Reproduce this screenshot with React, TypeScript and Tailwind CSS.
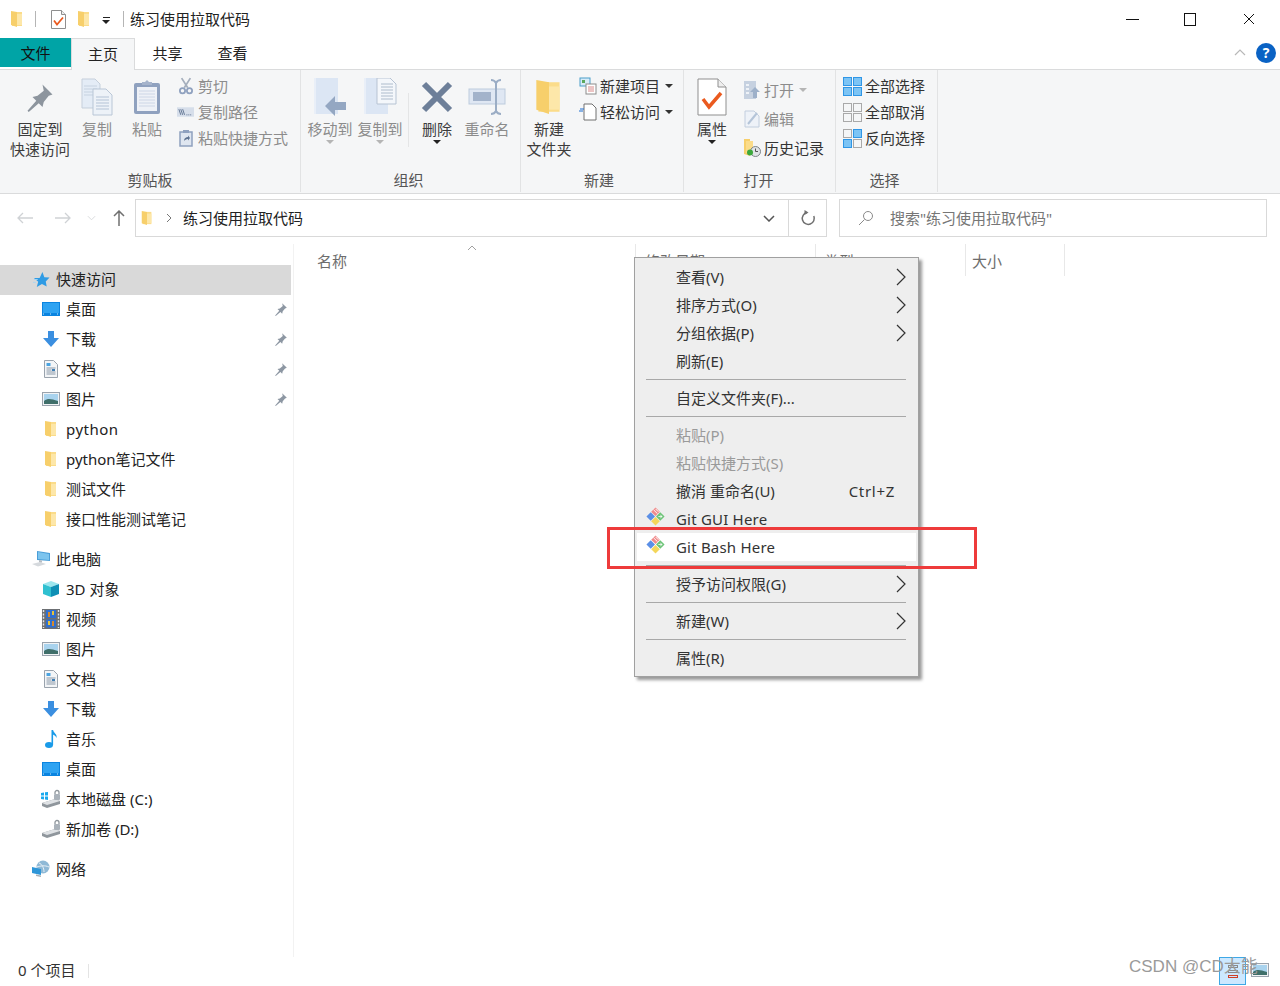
import type { ReactNode } from "react";

function Folder({ className = "w-[16px] h-[18px]" }: { className?: string }) {
  return (
    <svg viewBox="0 0 16 18" className={className}>
      <path d="M3 2h10v14H3z" fill="#fbdc8a" />
      <path d="M2 1l6 1v15l-6-2z" fill="#f7cf6b" />
      <path d="M8 4h5v11H8z" fill="#fde7a9" />
    </svg>
  );
}

function Pin({ className = "w-[14px] h-[14px]", color = "#8d97a3" }: { className?: string; color?: string }) {
  return (
    <svg viewBox="0 0 24 24" className={className}>
      <path d="M14 2l8 8-3 1-4 5-1 4-3-3-8 7-1-1 7-8-3-3 4-1 5-4z" fill={color} />
    </svg>
  );
}

function Desktop() {
  return (
    <svg viewBox="0 0 18 14" className="w-[18px] h-[14px]">
      <rect x="0" y="0" width="18" height="14" fill="#0a84e0" />
      <rect x="1" y="1" width="16" height="10" fill="#2ea3f2" />
      <path d="M1 12h16" stroke="#c9e6fb" strokeDasharray="1 6" />
    </svg>
  );
}

function Download() {
  return (
    <svg viewBox="0 0 18 18" className="w-[18px] h-[18px]">
      <path d="M6 1h6v7h5l-8 9-8-9h5z" fill="#3b8fe0" />
    </svg>
  );
}

function Doc() {
  return (
    <svg viewBox="0 0 16 18" className="w-[16px] h-[18px]">
      <path d="M1.5.5h9l4 4v13h-13z" fill="#f3f5f7" stroke="#9aa3ad" />
      <path d="M3.5 3h4v3h-4z" fill="#4aa3e0" />
      <path d="M3.5 8h9M3.5 10h5M3.5 12h9M3.5 14h9" stroke="#8b99a8" />
      <rect x="9" y="9" width="3" height="2" fill="#3f7fb5" />
    </svg>
  );
}

function Picture() {
  return (
    <svg viewBox="0 0 18 14" className="w-[18px] h-[14px]">
      <rect x=".5" y=".5" width="17" height="13" fill="#f1f3f5" stroke="#9aa3ad" />
      <rect x="2" y="2" width="14" height="10" fill="#a9d3ee" />
      <path d="M2 9c4-3 7-2 14 0v3H2z" fill="#3f6f6a" />
    </svg>
  );
}

function Computer() {
  return (
    <svg viewBox="0 0 20 18" className="w-[20px] h-[18px]">
      <path d="M6 1l13 2v8L6 10z" fill="#4a9ed8" />
      <path d="M7 2l11 2v6L7 9z" fill="#7cc4ee" />
      <path d="M1 14l8-2 6 2-8 2.5z" fill="#d5d9dd" />
      <path d="M8 10l3 .5v2L8 12z" fill="#b7bdc3" />
    </svg>
  );
}

function Cube() {
  return (
    <svg viewBox="0 0 18 18" className="w-[18px] h-[18px]">
      <path d="M9 1l8 3-8 3-8-3z" fill="#9ce6ee" />
      <path d="M1 4l8 3v10l-8-3z" fill="#2fc0d0" />
      <path d="M17 4L9 7v10l8-3z" fill="#0e8fb5" />
    </svg>
  );
}

function Film() {
  return (
    <svg viewBox="0 0 18 20" className="w-[18px] h-[20px]">
      <rect width="18" height="20" fill="#6c6f73" />
      <path d="M1.5 1v18M16.5 1v18" stroke="#e4e6e8" strokeWidth="1.4" strokeDasharray="2 1.4" />
      <rect x="4" y="1" width="10" height="8" fill="#2f6fd0" />
      <rect x="4" y="10.5" width="10" height="8" fill="#2f6fd0" />
      <path d="M6 3h2v5H6zM10 12h2v5h-2z" fill="#d98a2b" />
      <path d="M10 2h2v4h-2zM6 12h2v4H6z" fill="#e6c33c" />
    </svg>
  );
}

function Music() {
  return (
    <svg viewBox="0 0 14 20" className="w-[14px] h-[20px]">
      <ellipse cx="5" cy="16" rx="4" ry="3" fill="#1a9be8" />
      <path d="M7.5 1h1.6c.4 3 4.4 4 3.4 8-.7-2-3-3-3.4-3.4V16H7.5z" fill="#1a9be8" />
    </svg>
  );
}

function Drive({ windows }: { windows?: boolean }) {
  return (
    <svg viewBox="0 0 22 20" className="w-[22px] h-[20px]">
      <path d="M2 14l13-4 5 2v3L7 19l-5-2z" fill="#8f969c" />
      <path d="M2 14l13-4 5 2-13 4z" fill="#dfe2e5" />
      <rect x="14" y="5" width="6" height="6" rx="1" fill="#aab2ba" />
      <path d="M15 5V3.5a2 2 0 014 0V5" fill="none" stroke="#8f969c" strokeWidth="1.3" />
      {windows && <path d="M1 4l3-.5v3H1zM5 3.3L8 3v3.5H5zM1 7.5h3v3l-3-.5zM5 7.5h3v3.5l-3-.5z" fill="#19a9ee" />}
    </svg>
  );
}

function Network() {
  return (
    <svg viewBox="0 0 20 18" className="w-[20px] h-[18px]">
      <circle cx="12" cy="7" r="6.5" fill="#8fb9d6" />
      <path d="M8 3c3 1 5 5 5 9M6 7c3-1 8-2 12 0" stroke="#e9f1f6" fill="none" />
      <path d="M1 7l9 2v6l-9-2z" fill="#2e96d8" />
      <path d="M5 14.5l5 1v1.5l-5-1z" fill="#a7b0b7" />
    </svg>
  );
}

function Star() {
  return (
    <svg viewBox="0 0 18 18" className="w-[17px] h-[17px]">
      <path d="M10 1l2 5.500 5.500.5-4 4 1 5.500-5-2.700L4 17l1.500-5.500L1 7.500h6z" fill="#2f9be4" />
      <path d="M1 9h4M0 12h3" stroke="#a8d6f3" />
    </svg>
  );
}

function GitIcon() {
  return (
    <svg viewBox="0 0 22 22" className="w-[21px] h-[21px]">
      <path d="M6 6.500l4.500 4.500L6 15.500 1.500 11z" fill="#5b8fe6" />
      <path d="M11 1.500L15.500 6 11 10.500 6.500 6z" fill="#f08a8a" />
      <path d="M9 4l4 4M11 3l3 3" stroke="#fff" strokeWidth="1" />
      <path d="M16 6.500l4.500 4.500-4.500 4.500-4.500-4.500z" fill="#6cc477" />
      <path d="M14 11h4M16 9.500l2 1.500-2 1.500" stroke="#fff" strokeWidth=".8" fill="none" />
      <path d="M11 11.500l4.500 4.500-4.500 4.500L6.500 16z" fill="#f4d65a" />
    </svg>
  );
}

function Caret({ color = "#333" }: { color?: string }) {
  return (
    <svg viewBox="0 0 8 4" className="w-[8px] h-[4px]">
      <path d="M0 0h8L4 4z" fill={color} />
    </svg>
  );
}

function MenuArrow() {
  return (
    <svg viewBox="0 0 12 18" className="w-[12px] h-[18px]">
      <path d="M2 1l8 8-8 8" fill="none" stroke="#333" strokeWidth="1.2" />
    </svg>
  );
}

function CheckDoc({ big }: { big?: boolean }) {
  return (
    <svg viewBox="0 0 30 38" className={big ? "w-[30px] h-[38px]" : "w-[15px] h-[19px]"}>
      <path d="M1 1h20l8 8v28H1z" fill="#fff" stroke="#8f8f8f" strokeWidth={big ? 1 : 2} />
      <path d="M21 1v8h8" fill="#eee" stroke="#8f8f8f" strokeWidth={big ? 1 : 2} />
      <path d="M6 21l6 8 12-14" fill="none" stroke="#ea5a1f" strokeWidth="3.500" />
    </svg>
  );
}

function CopyIcon() {
  return (
    <svg viewBox="0 0 32 38" className="w-[32px] h-[38px]">
      <path d="M1 1h13l5 5v24H1z" fill="#e4ecf6" stroke="#c5cfdb" />
      <path d="M3 8h13M3 11h13M3 14h13M3 17h13" stroke="#c6d2e0" />
      <path d="M12 11h13l6 6v20H12z" fill="#edf2f8" stroke="#b9c6d6" />
      <path d="M15 19h13M15 22h13M15 25h13M15 28h13M15 31h13" stroke="#b4c3d6" />
    </svg>
  );
}

function PasteIcon() {
  return (
    <svg viewBox="0 0 28 36" className="w-[28px] h-[36px]">
      <rect x="1" y="4" width="26" height="31" rx="2" fill="#8fa1bf" />
      <rect x="4" y="8" width="20" height="24" fill="#eef1f7" />
      <path d="M6 12h16M6 15h16M6 18h16M6 21h16M6 24h16M6 27h16" stroke="#cdd6e6" />
      <path d="M9 6h10V3h-3l-2-2-2 2H9z" fill="#a6b4cc" />
    </svg>
  );
}

function MoveIcon({ copy }: { copy?: boolean }) {
  return (
    <svg viewBox="0 0 34 38" className="w-[34px] h-[38px]">
      <path d="M1 0h24v36H1z" fill="#dce6f4" />
      <path d="M1 0h2v36H1z" fill="#e9eff8" />
      {copy ? (
        <>
          <path d="M14-1h13l6 6v20H14z" transform="translate(0 1)" fill="#f4f7fb" stroke="#b7c3d3" />
          <path d="M18 6h12M18 9h12M18 12h12M18 15h12M18 18h12M18 21h12" stroke="#aebccc" />
        </>
      ) : (
        <path d="M12 28l10-10v6h11v8H22v6z" fill="#94a7c2" />
      )}
    </svg>
  );
}

function RenameIcon() {
  return (
    <svg viewBox="0 0 38 36" className="w-[38px] h-[36px]">
      <rect x="1" y="10" width="36" height="15" fill="#dfe7f3" stroke="#bdcbdd" />
      <rect x="5" y="13" width="18" height="9" fill="#a3b3cb" />
      <path d="M23 1c3 0 4 1 5 3 1-2 2-3 5-3M23 35c3 0 4-1 5-3 1 2 2 3 5 3M28 4v28" fill="none" stroke="#9badc5" strokeWidth="2" />
    </svg>
  );
}

function SmallGlyph({ name }: { name: string }) {
  if (name === "cut")
    return (
      <svg viewBox="0 0 16 20" className="w-[14px] h-[18px]">
        <path d="M3 1l7 11M13 1L6 12" stroke="#a4aebc" strokeWidth="2" />
        <circle cx="4" cy="15.500" r="3" fill="none" stroke="#8fa1bf" strokeWidth="2" />
        <circle cx="12" cy="15.500" r="3" fill="none" stroke="#8fa1bf" strokeWidth="2" />
      </svg>
    );
  if (name === "path")
    return (
      <svg viewBox="0 0 18 10" className="w-[17px] h-[10px]">
        <rect width="18" height="10" fill="#d6deea" />
        <path d="M2 2l2 6M4 2l2 6M6 2l2 6" stroke="#5f7391" />
        <path d="M10 8h1M12 8h1M14 8h1" stroke="#5f7391" />
      </svg>
    );
  if (name === "shortcut")
    return (
      <svg viewBox="0 0 14 18" className="w-[14px] h-[18px]">
        <rect x="1" y="3" width="12" height="14" fill="#dfe6f0" stroke="#8fa1bf" strokeWidth="1.500" />
        <rect x="4" y="1" width="6" height="3" fill="#8fa1bf" />
        <path d="M5 12c0-3 2-4 4-4V6.500L11 9l-2 2.500V10c-2 0-3 1-4 2z" fill="#5f7391" />
      </svg>
    );
  if (name === "newitem")
    return (
      <svg viewBox="0 0 18 18" className="w-[18px] h-[18px]">
        <rect x="1" y="1" width="10" height="8" fill="#d8ecf8" stroke="#4a9ec9" />
        <rect x="3" y="3" width="3" height="3" fill="#5ba85c" />
        <rect x="7" y="7" width="10" height="10" fill="#fff" stroke="#8c8c8c" />
        <path d="M9 10h6M9 12h6M9 14h6" stroke="#d98a8a" />
      </svg>
    );
  if (name === "easy")
    return (
      <svg viewBox="0 0 18 18" className="w-[18px] h-[18px]">
        <path d="M5 1h8l4 4v12H5z" fill="#fff" stroke="#707070" />
        <path d="M1 6h4M0 8h4" stroke="#1f6fd0" />
      </svg>
    );
  if (name === "open")
    return (
      <svg viewBox="0 0 16 18" className="w-[16px] h-[18px]">
        <rect x="0" y="0" width="12" height="18" fill="#c6d1e0" />
        <path d="M2 3h3v2H2zM2 7h3v2H2zM2 11h3v2H2z" fill="#eef2f7" />
        <path d="M11 6l5 5h-3v6H9v-6H6z" fill="#9db0c9" />
      </svg>
    );
  if (name === "edit")
    return (
      <svg viewBox="0 0 16 18" className="w-[16px] h-[18px]">
        <path d="M1 1h9l5 5v11H1z" fill="#eef2f8" stroke="#c2cede" />
        <path d="M4 14L13 3" stroke="#b4c4d8" strokeWidth="2" />
      </svg>
    );
  if (name === "history")
    return (
      <svg viewBox="0 0 18 18" className="w-[18px] h-[18px]">
        <path d="M1 0h6v17l-6-2z" fill="#f7cf6b" />
        <path d="M3 2h7v12H3z" fill="#fbdc8a" />
        <circle cx="12.500" cy="12.500" r="5" fill="#dfe3e6" stroke="#7d8488" />
        <path d="M12.500 9.500v3h2.500" stroke="#555" fill="none" />
        <circle cx="7" cy="13.500" r="3" fill="#3ca83c" />
      </svg>
    );
  const cells: Record<string, boolean[]> = {
    all: [true, true, true, true],
    none: [false, false, false, false],
    invert: [false, true, true, false],
  };
  return (
    <div className="grid grid-cols-2 gap-[1px] w-[19px] h-[19px]">
      {cells[name].map((on, i) => (
        <div
          key={i}
          className={on ? "bg-[#7cc4f5] border border-[#2f96e6]" : "bg-[#f5f6f7] border border-[#a9a9a9]"}
        />
      ))}
    </div>
  );
}

function LargeBtn({
  width,
  icon,
  label,
  dim,
  caret,
}: {
  width: string;
  icon: ReactNode;
  label: string[];
  dim?: boolean;
  caret?: "dark" | "light";
}) {
  return (
    <div className={`${width} flex flex-col items-center`}>
      <div className="h-[44px] flex items-center justify-center">{icon}</div>
      {label.map((l) => (
        <div key={l} className={`h-[20px] leading-[20px] whitespace-nowrap ${dim ? "text-[#8c8c8c]" : "text-[#3c3c3c]"}`}>
          {l}
        </div>
      ))}
      {caret && (
        <div className="mt-[1px]">
          <Caret color={caret === "dark" ? "#222" : "#b5b5b5"} />
        </div>
      )}
    </div>
  );
}

function SmallBtn({
  glyph,
  label,
  dim,
  caret,
  height = "h-[26px]",
}: {
  glyph: string;
  label: string;
  dim?: boolean;
  caret?: "dark" | "light";
  height?: string;
}) {
  return (
    <div className={`${height} flex items-center gap-[3px] whitespace-nowrap`}>
      <div className="w-[19px] flex justify-center">
        <SmallGlyph name={glyph} />
      </div>
      <span className={dim ? "text-[#8c8c8c]" : "text-[#333]"}>{label}</span>
      {caret && (
        <span className="ml-[2px]">
          <Caret color={caret === "dark" ? "#333" : "#b5b5b5"} />
        </span>
      )}
    </div>
  );
}

function Group({
  width,
  label,
  pad,
  labelPad = "",
  children,
}: {
  width: string;
  label: string;
  pad: string;
  labelPad?: string;
  children: ReactNode;
}) {
  return (
    <div className={`${width} h-[122px] flex flex-col border-r border-[#e2e3e4]`}>
      <div className={`${pad} h-[100px] flex items-start`}>{children}</div>
      <div className={`text-center text-[#555] leading-[20px] ${labelPad}`}>{label}</div>
    </div>
  );
}

function Ribbon() {
  return (
    <div className="h-[125px] bg-[#f5f6f7] border-t border-b border-[#dadbdc] flex -mt-[1px]">
      <Group width="w-[301px]" label="剪贴板" pad="pl-[10px] pt-[5px]">
        <LargeBtn width="w-[60px]" icon={<Pin className="w-[30px] h-[30px]" color="#8d959e" />} label={["固定到", "快速访问"]} />
        <LargeBtn width="w-[54px]" dim icon={<CopyIcon />} label={["复制"]} />
        <LargeBtn width="w-[46px]" dim icon={<PasteIcon />} label={["粘贴"]} />
        <div className="ml-[6px] -mt-[2px]">
          <SmallBtn glyph="cut" label="剪切" dim />
          <SmallBtn glyph="path" label="复制路径" dim />
          <SmallBtn glyph="shortcut" label="粘贴快捷方式" dim />
        </div>
      </Group>
      <Group width="w-[220px]" label="组织" pad="pl-[4px] pt-[5px]" labelPad="pr-[4px]">
        <LargeBtn width="w-[50px]" dim icon={<MoveIcon />} label={["移动到"]} caret="light" />
        <LargeBtn width="w-[50px]" dim icon={<MoveIcon copy />} label={["复制到"]} caret="light" />
        <div className="w-[1px] h-[54px] bg-[#e4e5e6] mt-[18px] mx-[3px]" />
        <LargeBtn
          width="w-[50px]"
          icon={
            <svg viewBox="0 0 32 32" className="w-[32px] h-[32px]">
              <path d="M3 3l26 26M29 3L3 29" stroke="#6d7f99" strokeWidth="6" />
            </svg>
          }
          label={["删除"]}
          caret="dark"
        />
        <LargeBtn width="w-[50px]" dim icon={<RenameIcon />} label={["重命名"]} />
      </Group>
      <Group width="w-[163px]" label="新建" pad="pl-[4px] pt-[5px]" labelPad="pr-[6px]">
        <LargeBtn width="w-[48px]" icon={<Folder className="w-[34px] h-[38px]" />} label={["新建", "文件夹"]} />
        <div className="ml-[5px] -mt-[2px]">
          <SmallBtn glyph="newitem" label="新建项目" caret="dark" />
          <SmallBtn glyph="easy" label="轻松访问" caret="dark" />
        </div>
      </Group>
      <Group width="w-[152px]" label="打开" pad="pl-[3px] pt-[5px]" labelPad="pr-[2px]">
        <LargeBtn width="w-[50px]" icon={<CheckDoc big />} label={["属性"]} caret="dark" />
        <div className="ml-[5px]">
          <SmallBtn glyph="open" label="打开" dim caret="light" height="h-[29px]" />
          <SmallBtn glyph="edit" label="编辑" dim height="h-[29px]" />
          <SmallBtn glyph="history" label="历史记录" height="h-[29px]" />
        </div>
      </Group>
      <Group width="w-[102px]" label="选择" pad="pl-[7px] pt-[3px]" labelPad="pr-[4px]">
        <div>
          <SmallBtn glyph="all" label="全部选择" />
          <SmallBtn glyph="none" label="全部取消" />
          <SmallBtn glyph="invert" label="反向选择" />
        </div>
      </Group>
    </div>
  );
}

function AddressBar() {
  return (
    <div className="h-[50px] flex items-center pb-[2px]">
      <div className="w-[135px] relative h-full flex items-center pl-[17px] gap-[22px]">
        <svg viewBox="0 0 16 12" className="w-[16px] h-[12px]">
          <path d="M16 6H2M6 1L1 6l5 5" fill="none" stroke="#cfd2d5" strokeWidth="1.300" />
        </svg>
        <svg viewBox="0 0 16 12" className="w-[16px] h-[12px]">
          <path d="M0 6h14M10 1l5 5-5 5" fill="none" stroke="#cfd2d5" strokeWidth="1.300" />
        </svg>
        <svg viewBox="0 0 10 6" className="w-[9px] h-[6px] -ml-[6px]">
          <path d="M1 1l4 4 4-4" fill="none" stroke="#d5d7d9" />
        </svg>
        <svg viewBox="0 0 12 16" className="w-[12px] h-[16px] -ml-[5px]">
          <path d="M6 16V1M1 6l5-5 5 5" fill="none" stroke="#707070" strokeWidth="1.500" />
        </svg>
      </div>
      <div className="w-[692px] h-[38px] border border-[#d9d9d9] flex items-center">
        <div className="ml-[4px]">
          <Folder className="w-[14px] h-[16px]" />
        </div>
        <svg viewBox="0 0 6 10" className="w-[6px] h-[10px] ml-[12px]">
          <path d="M1 1l4 4-4 4" fill="none" stroke="#777" />
        </svg>
        <span className="ml-[11px] text-[#222]">练习使用拉取代码</span>
        <div className="ml-auto mr-[13px]">
          <svg viewBox="0 0 12 7" className="w-[12px] h-[7px]">
            <path d="M1 1l5 5 5-5" fill="none" stroke="#555" strokeWidth="1.500" />
          </svg>
        </div>
        <div className="w-[38px] h-full border-l border-[#d9d9d9] flex items-center justify-center">
          <svg viewBox="0 0 16 16" className="w-[16px] h-[16px]">
            <path d="M7 2.500A6 6 0 1 0 13.800 6" fill="none" stroke="#6f6f6f" strokeWidth="1.500" />
            <path d="M4.500 0l4 2.500-4 2.500z" fill="#6f6f6f" />
          </svg>
        </div>
      </div>
      <div className="ml-[12px] w-[428px] h-[38px] border border-[#d9d9d9] flex items-center pl-[18px]">
        <svg viewBox="0 0 16 16" className="w-[16px] h-[16px]">
          <circle cx="10" cy="6" r="4.500" fill="none" stroke="#8a8a8a" />
          <path d="M6.500 9.500L1 15" stroke="#8a8a8a" />
        </svg>
        <span className="ml-[16px] text-[#767676]">搜索"练习使用拉取代码"</span>
      </div>
    </div>
  );
}

const quick = [
  { icon: <Desktop />, label: "桌面", pin: true },
  { icon: <Download />, label: "下载", pin: true },
  { icon: <Doc />, label: "文档", pin: true },
  { icon: <Picture />, label: "图片", pin: true },
  { icon: <Folder />, label: "python", wide: true },
  { icon: <Folder />, label: "python笔记文件" },
  { icon: <Folder />, label: "测试文件" },
  { icon: <Folder />, label: "接口性能测试笔记" },
];

const pc = [
  { icon: <Cube />, label: "3D 对象" },
  { icon: <Film />, label: "视频" },
  { icon: <Picture />, label: "图片" },
  { icon: <Doc />, label: "文档" },
  { icon: <Download />, label: "下载" },
  { icon: <Music />, label: "音乐" },
  { icon: <Desktop />, label: "桌面" },
  { icon: <Drive windows />, label: "本地磁盘 (C:)" },
  { icon: <Drive />, label: "新加卷 (D:)" },
];

function NavRow({ icon, label, pin, wide }: { icon: ReactNode; label: string; pin?: boolean; wide?: boolean }) {
  return (
    <div className="h-[30px] flex items-center pb-[2px]">
      <div className="w-[22px] ml-[40px] flex justify-center">{icon}</div>
      <span className={`ml-[4px] text-[#222] ${wide ? "tracking-[0.5px]" : ""}`}>{label}</span>
      {pin && (
        <span className="ml-auto mr-[3px]">
          <Pin />
        </span>
      )}
    </div>
  );
}

function NavHead({ icon, label, active }: { icon: ReactNode; label: string; active?: boolean }) {
  return (
    <div className={`h-[30px] flex items-center pb-[2px] ${active ? "bg-[#d9d9d9]" : ""}`}>
      <div className="w-[22px] ml-[30px] flex justify-center">{icon}</div>
      <span className="ml-[4px] text-[#222]">{label}</span>
    </div>
  );
}

function Sidebar() {
  return (
    <div className="w-[294px] border-r border-[#f2f2f2] pt-[21px] pr-[2px] h-[713px]">
      <NavHead icon={<Star />} label="快速访问" active />
      {quick.map((r) => (
        <NavRow key={r.label} {...r} />
      ))}
      <div className="h-[10px]" />
      <NavHead icon={<Computer />} label="此电脑" />
      {pc.map((r) => (
        <NavRow key={r.label} {...r} />
      ))}
      <div className="h-[10px]" />
      <NavHead icon={<Network />} label="网络" />
    </div>
  );
}

function Headers() {
  return (
    <div className="flex h-[32px] flex-1 text-[#6d6d6d]">
      <div className="w-[341px] pl-[23px] pt-[7px] relative">
        名称
        <svg viewBox="0 0 10 6" className="w-[10px] h-[6px] absolute left-[173px] top-[1px]">
          <path d="M1 5l4-4 4 4" fill="none" stroke="#a0a0a0" />
        </svg>
      </div>
      <div className="w-[180px] border-l border-[#e8e8e8] pl-[9px] pt-[7px]">修改日期</div>
      <div className="w-[150px] border-l border-[#e8e8e8] pl-[8px] pt-[7px]">类型</div>
      <div className="w-[100px] border-l border-r border-[#e8e8e8] pl-[6px] pt-[7px]">大小</div>
    </div>
  );
}

type MenuEntry =
  | { sep: true }
  | { label: string; arrow?: boolean; off?: boolean; hint?: string; git?: boolean; hot?: boolean };

const menu: MenuEntry[] = [
  { label: "查看(V)", arrow: true },
  { label: "排序方式(O)", arrow: true },
  { label: "分组依据(P)", arrow: true },
  { label: "刷新(E)" },
  { sep: true },
  { label: "自定义文件夹(F)..." },
  { sep: true },
  { label: "粘贴(P)", off: true },
  { label: "粘贴快捷方式(S)", off: true },
  { label: "撤消 重命名(U)", hint: "Ctrl+Z" },
  { label: "Git GUI Here", git: true },
  { label: "Git Bash Here", git: true, hot: true },
  { sep: true },
  { label: "授予访问权限(G)", arrow: true },
  { sep: true },
  { label: "新建(W)", arrow: true },
  { sep: true },
  { label: "属性(R)" },
];

function ContextMenu() {
  return (
    <div className="absolute left-[634px] top-[257px] w-[285px] h-[420px] bg-[#eeeeee] border border-[#a0a0a0] shadow-[3px_3px_3px_rgba(0,0,0,0.4)] pt-[5px]">
      {menu.map((m, i) =>
        "sep" in m ? (
          <div key={i} className="h-[9px] flex items-center pl-[11px] pr-[12px]">
            <div className="h-[1px] w-full bg-[#a8a8a8]" />
          </div>
        ) : (
          <div
            key={m.label}
            className={`h-[28px] flex items-center relative pb-[1px] ${m.hot ? "bg-white mx-[2px]" : ""}`}
          >
            {m.git && (
              <div className={`absolute top-[1px] ${m.hot ? "left-[8px]" : "left-[10px]"}`}>
                <GitIcon />
              </div>
            )}
            <span
              className={`${m.hot ? "ml-[39px]" : "ml-[41px]"} ${m.off ? "text-[#9a9a9a]" : "text-[#333]"} ${m.git ? "tracking-[0.2px]" : ""}`}
            >
              {m.label}
            </span>
            {m.hint && <span className="ml-auto mr-[23px] text-[#333] tracking-[0.7px]">{m.hint}</span>}
            {m.arrow && (
              <span className="ml-auto mr-[11px]">
                <MenuArrow />
              </span>
            )}
          </div>
        ),
      )}
    </div>
  );
}

export default function App() {
  return (
    <div className="relative w-[1280px] h-[986px] bg-white overflow-hidden text-[15px] leading-[20px] font-['Noto_Sans','Noto_Sans_CJK_SC',sans-serif]">
      {/* title bar */}
      <div className="h-[38px] flex items-center">
        <div className="ml-[9px]">
          <Folder />
        </div>
        <div className="w-[1px] h-[16px] bg-[#b5b5b5] ml-[10px]" />
        <div className="ml-[15px]">
          <CheckDoc />
        </div>
        <div className="ml-[10px]">
          <Folder />
        </div>
        <div className="ml-[10px] flex flex-col items-center gap-[2px] pt-[3px]">
          <div className="w-[7px] h-[1px] bg-[#222]" />
          <Caret color="#222" />
        </div>
        <div className="w-[1px] h-[16px] bg-[#b5b5b5] ml-[13px]" />
        <span className="ml-[6px] text-[#222]">练习使用拉取代码</span>
        <div className="ml-auto flex items-center">
          <div className="w-[58px] flex justify-center">
            <div className="w-[13px] h-[1px] bg-[#111]" />
          </div>
          <div className="w-[58px] flex justify-center">
            <div className="w-[12px] h-[13px] border border-[#111]" />
          </div>
          <div className="w-[60px] flex justify-center mr-[1px]">
            <svg viewBox="0 0 12 12" className="w-[12px] h-[12px]">
              <path d="M1 1l10 10M11 1L1 11" stroke="#111" />
            </svg>
          </div>
        </div>
      </div>

      {/* tabs */}
      <div className="h-[32px] flex items-start relative z-10">
        <div className="w-[71px] h-[29px] bg-[#00a4a6] flex items-center justify-center text-[#111]">文件</div>
        <div className="w-[64px] h-[32px] bg-[#f5f6f7] border-t border-l border-r border-[#dadbdc] flex items-start pt-[5px] justify-center text-[#222]">
          主页
        </div>
        <div className="w-[65px] h-[29px] flex items-center justify-center text-[#222]">共享</div>
        <div className="w-[65px] h-[29px] flex items-center justify-center text-[#222]">查看</div>
        <div className="ml-auto mr-[4px] h-[29px] flex items-center gap-[10px]">
          <svg viewBox="0 0 12 7" className="w-[12px] h-[7px]">
            <path d="M1 6l5-5 5 5" fill="none" stroke="#b8b8b8" strokeWidth="1.200" />
          </svg>
          <div className="w-[20px] h-[20px] rounded-full bg-[#0a62c4] text-white font-bold text-[14px] flex items-center justify-center">
            ?
          </div>
        </div>
      </div>

      <Ribbon />
      <AddressBar />

      <div className="flex">
        <Sidebar />
        <Headers />
      </div>

      {/* status bar */}
      <div className="h-[28px] flex items-center pl-[18px] text-[#333]">
        <span className="-translate-y-[1px]">0 个项目</span>
        <div className="w-[1px] h-[14px] bg-[#e4e4e4] ml-[13px]" />
        <div className="ml-auto mr-[34px] w-[27px] h-[28px] bg-[#cce8ff] border border-[#3ea8e6] flex flex-col items-center justify-center gap-[2px]">
          <div className="w-[10px] h-[3px] border border-[#8a8a8a]" />
          <div className="w-[10px] h-[3px] border border-[#8a8a8a]" />
          <div className="w-[10px] h-[3px] border border-[#d0402a]" />
        </div>
      </div>
      <div className="absolute left-[1251px] top-[963px]">
        <Picture />
      </div>
      <div className="absolute left-[1129px] top-[954px] text-[17px] leading-[26px] text-[#9a9a9a] whitespace-nowrap font-['Liberation_Sans','Noto_Sans_CJK_SC',sans-serif]">
        CSDN @CD大能
      </div>

      <ContextMenu />
      <div className="absolute left-[607px] top-[527px] w-[370px] h-[42px] border-[3px] border-[#ee3b3b]" />
    </div>
  );
}
